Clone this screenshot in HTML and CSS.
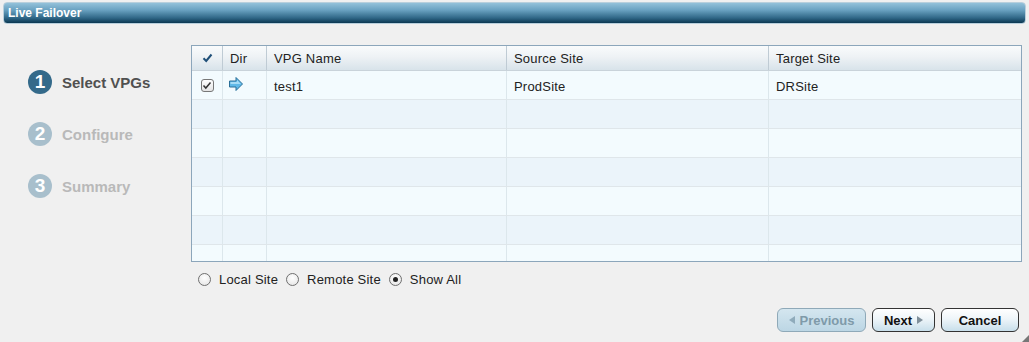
FILE: index.html
```html
<!DOCTYPE html>
<html>
<head>
<meta charset="utf-8">
<link rel="stylesheet" href="styles.css">
</head>
<body>
<div class="window">
  <div class="titlebar">Live Failover</div>
  <div class="content">
    <ul class="steps">
      <li class="step active"><span class="num">1</span><span class="label">Select VPGs</span></li>
      <li class="step"><span class="num">2</span><span class="label">Configure</span></li>
      <li class="step"><span class="num">3</span><span class="label">Summary</span></li>
    </ul>
    <div class="main">
      <div class="grid">
        <div class="row head">
          <div class="cell c-check"><svg width="11" height="10" viewBox="0 0 11 10"><path d="M1.5 5.2 L4.2 8 L9.5 1.5" fill="none" stroke="#1f4f78" stroke-width="2"/></svg></div>
          <div class="cell">Dir</div>
          <div class="cell">VPG Name</div>
          <div class="cell">Source Site</div>
          <div class="cell">Target Site</div>
        </div>
        <div class="row odd first">
          <div class="cell c-check"><span class="cbox"><svg width="10" height="9" viewBox="0 0 10 9"><path d="M1.5 4.5 L3.8 7 L8.5 1.5" fill="none" stroke="#333" stroke-width="1.5"/></svg></span></div>
          <div class="cell c-dir"><svg width="16" height="16" viewBox="0 0 16 16"><path d="M1.5 5 H8 V1.5 L14.5 8 L8 14.5 V11 H1.5 Z" fill="#5fb9e8" stroke="#2a6f98" stroke-width="1"/><path d="M2.5 6 H9 V4 L12.8 8 L2.5 8 Z" fill="#a6dcf6"/></svg></div>
          <div class="cell">test1</div>
          <div class="cell">ProdSite</div>
          <div class="cell">DRSite</div>
        </div>
        <div class="row even"><div class="cell"></div><div class="cell"></div><div class="cell"></div><div class="cell"></div><div class="cell"></div></div>
        <div class="row odd"><div class="cell"></div><div class="cell"></div><div class="cell"></div><div class="cell"></div><div class="cell"></div></div>
        <div class="row even"><div class="cell"></div><div class="cell"></div><div class="cell"></div><div class="cell"></div><div class="cell"></div></div>
        <div class="row odd"><div class="cell"></div><div class="cell"></div><div class="cell"></div><div class="cell"></div><div class="cell"></div></div>
        <div class="row even"><div class="cell"></div><div class="cell"></div><div class="cell"></div><div class="cell"></div><div class="cell"></div></div>
        <div class="row odd"><div class="cell"></div><div class="cell"></div><div class="cell"></div><div class="cell"></div><div class="cell"></div></div>
      </div>
      <div class="radios">
        <label class="radio"><span class="rb"></span>Local Site</label>
        <label class="radio"><span class="rb"></span>Remote Site</label>
        <label class="radio"><span class="rb on"></span>Show All</label>
      </div>
    </div>
  </div>
  <div class="footer">
    <button class="btn disabled"><span class="tri left"></span>Previous</button>
    <button class="btn next">Next<span class="tri right"></span></button>
    <button class="btn cancel">Cancel</button>
  </div>
  <div class="grip"></div>
</div>
</body>
</html>
```
FILE: styles.css
```css
html, body {
  margin: 0;
  padding: 0;
  background: #f0f0f0;
}
body {
  width: 1029px;
  height: 342px;
  overflow: hidden;
  font-family: "Liberation Sans", Arial, sans-serif;
  color: #222;
}
.window {
  position: relative;
  height: 342px;
}
.titlebar {
  margin: 2px 3px 0 3px;
  height: 22px;
  box-sizing: border-box;
  border-radius: 4px;
  background: linear-gradient(#93c1da 0%, #6aa2c1 35%, #2f6686 75%, #0c3852 100%);
  border: 1px solid #b8cfdc;
  color: #fff;
  font-weight: bold;
  font-size: 12px;
  line-height: 20px;
  padding-left: 4px;
}
.content {
  display: flex;
  padding-top: 21px;
}
.steps {
  list-style: none;
  margin: 0;
  padding: 25px 0 0 28px;
  width: 163px;
}
.step {
  display: flex;
  align-items: center;
  height: 24px;
  margin-bottom: 28px;
  font-weight: bold;
  font-size: 15px;
  color: #b9b9b9;
}
.step .num {
  width: 24px;
  height: 24px;
  border-radius: 50%;
  background: #a8bfcc;
  color: #fff;
  font-size: 19px;
  line-height: 24px;
  text-align: center;
  margin-right: 10px;
}
.step.active { color: #505050; }
.step.active .num { background: #346a8a; }
.main {
  width: 831px;
}
.grid {
  border: 1px solid #8ca6bb;
  height: 215px;
  overflow: hidden;
  background: #f3fbfe;
}
.row {
  display: grid;
  grid-template-columns: 31px 44px 240px 262px 1fr;
  height: 29px;
  box-sizing: border-box;
  border-bottom: 1px solid #dfe6ea;
  font-size: 13px;
}
.row.head {
  height: 25px;
  background: linear-gradient(#f9fbfc 0%, #eef2f5 45%, #d8e3ea 100%);
  border-bottom: 1px solid #c9d3da;
  color: #222;
}
.row.odd { background: #f3fbfe; }
.row.even { background: #ebf4fa; }
.cell {
  border-right: 1px solid #dce7ec;
  padding-left: 7px;
  display: flex;
  align-items: center;
  white-space: nowrap;
  letter-spacing: 0.2px;
}
.row.first .cell { padding-top: 3px; }
.row.head .cell { border-right-color: #bfcbd4; }
.cell:last-child { border-right: none; }
.c-check {
  padding-left: 0;
  justify-content: center;
}
.row.first .c-check { padding-top: 0; }
.row.first .c-dir { padding-left: 5px; padding-top: 0; padding-bottom: 2px; }
.cbox {
  width: 13px;
  height: 13px;
  box-sizing: border-box;
  border: 1px solid #777;
  border-radius: 3px;
  background: linear-gradient(#ffffff, #e4e4e4);
  display: flex;
  align-items: center;
  justify-content: center;
}
.radios {
  display: flex;
  align-items: center;
  gap: 8px;
  padding: 10px 0 0 7px;
  font-size: 13px;
  letter-spacing: 0.2px;
}
.radio {
  display: flex;
  align-items: center;
  color: #222;
}
.rb {
  width: 13px;
  height: 13px;
  box-sizing: border-box;
  border: 1px solid #6f6f6f;
  border-radius: 50%;
  background: radial-gradient(circle at 50% 35%, #ffffff, #e2e2e2);
  margin-right: 8px;
  display: flex;
  align-items: center;
  justify-content: center;
}
.rb.on::after {
  content: "";
  width: 5px;
  height: 5px;
  border-radius: 50%;
  background: #222;
}
.footer {
  display: flex;
  justify-content: flex-end;
  gap: 6px;
  padding: 21px 10px 0 0;
}
.btn {
  height: 24px;
  box-sizing: border-box;
  border: 1px solid #333;
  border-radius: 6px;
  background: linear-gradient(#ffffff 0%, #eef5f9 45%, #c8dfeb 100%);
  font-family: "Liberation Sans", Arial, sans-serif;
  font-weight: bold;
  font-size: 13px;
  color: #111;
  padding: 0 10px;
  display: flex;
  align-items: center;
  justify-content: center;
  gap: 5px;
}
.btn.disabled {
  width: 89px;
  border-color: #8fa9b8;
  background: linear-gradient(#d4e6ef, #bcd6e4);
  color: #7f9aa9;
}
.btn.next { width: 63px; }
.btn.cancel { width: 78px; }
.tri {
  width: 0;
  height: 0;
  border-top: 4px solid transparent;
  border-bottom: 4px solid transparent;
}
.tri.left { border-right: 6px solid #8fabbb; }
.tri.right { border-left: 6px solid #7f8f9a; }
.grip {
  position: absolute;
  right: 0;
  bottom: 0;
  width: 0;
  height: 0;
  border-left: 9px solid transparent;
  border-bottom: 9px solid #777;
}
```
